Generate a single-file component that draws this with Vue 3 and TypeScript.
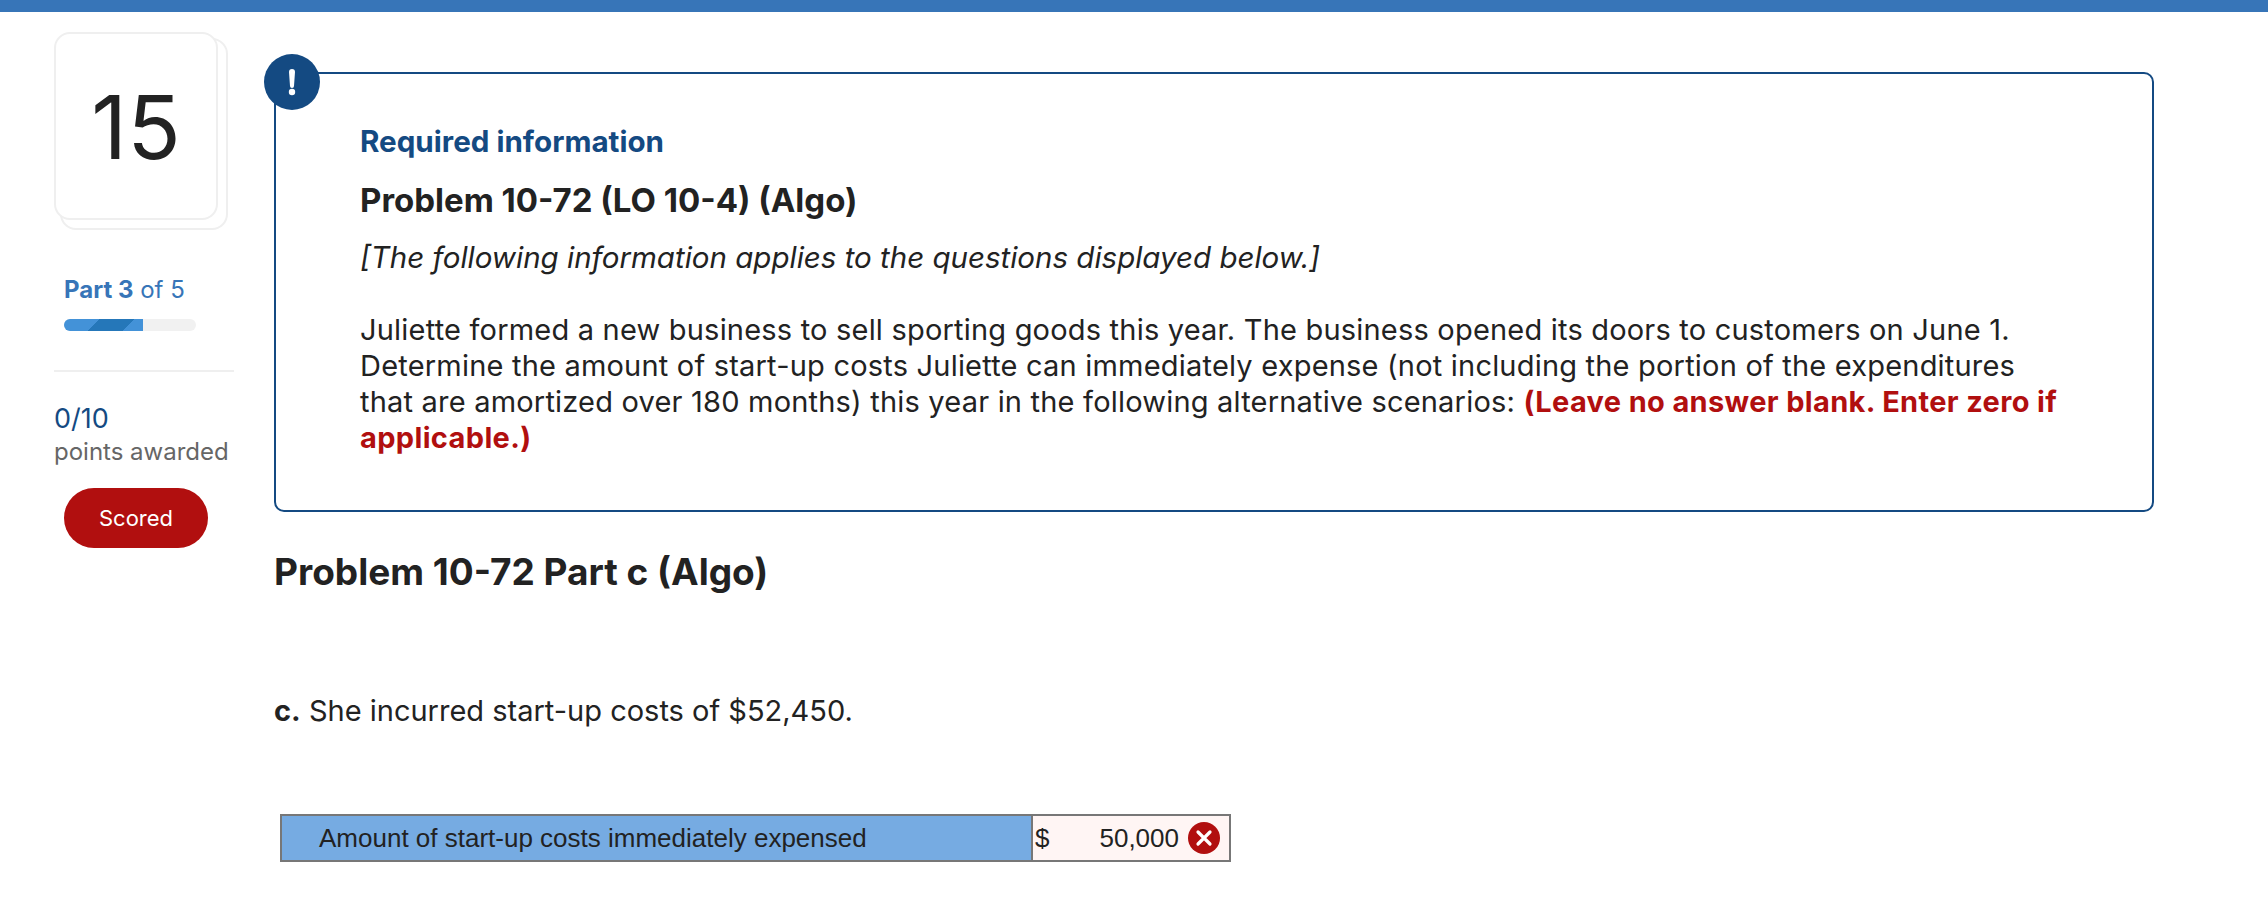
<template>
  <div class="page">
    <div class="top-bar"></div>
    <div class="layout">
      <aside class="sidebar">
        <div class="number-card">
          <div class="number-back"></div>
          <div class="number-face">{{ questionNumber }}</div>
        </div>
        <div class="part-label"><strong>Part {{ part }}</strong> of {{ totalParts }}</div>
        <div class="progress">
          <div class="progress-fill" :style="{ width: progressWidth }"></div>
        </div>
        <hr class="divider" />
        <div class="score">0/10</div>
        <div class="score-label">points awarded</div>
        <div class="scored-pill">Scored</div>
      </aside>

      <main class="content">
        <section class="info-box">
          <span class="info-badge">
            <svg width="14" height="28" viewBox="0 0 14 28" aria-hidden="true">
              <path d="M4 4a3 3 0 0 1 6 0L9 18a2 2 0 0 1-4 0Z" fill="#fff" />
              <circle cx="7" cy="24" r="3.2" fill="#fff" />
            </svg>
          </span>
          <div class="required">Required information</div>
          <div class="problem-title">Problem 10-72 (LO 10-4) (Algo)</div>
          <p class="note">[The following information applies to the questions displayed below.]</p>
          <p class="body-text">
            Juliette formed a new business to sell sporting goods this year. The business opened its doors to customers on June 1.<br />
            Determine the amount of start-up costs Juliette can immediately expense (not including the portion of the expenditures<br />
            that are amortized over 180 months) this year in the following alternative scenarios:
            <strong class="warning">(Leave no answer blank. Enter zero if<br />applicable.)</strong>
          </p>
        </section>

        <h2 class="part-title">Problem 10-72 Part c (Algo)</h2>
        <p class="question"><strong>c.</strong> She incurred start-up costs of $52,450.</p>

        <table class="answer-table">
          <tbody>
            <tr>
              <td class="label-cell">Amount of start-up costs immediately expensed</td>
              <td class="value-cell">
                <div class="value-row">
                  <span>$</span>
                  <span class="value">50,000</span>
                  <svg class="wrong" width="32" height="32" viewBox="0 0 32 32" aria-hidden="true">
                    <circle cx="16" cy="16" r="16" fill="#b10f0f" />
                    <path d="M10 10l12 12M22 10L10 22" stroke="#fff" stroke-width="3.2" stroke-linecap="round" />
                  </svg>
                </div>
              </td>
            </tr>
          </tbody>
        </table>
      </main>
    </div>
  </div>
</template>

<script setup lang="ts">
import { computed } from 'vue';

const questionNumber = 15;
const part = 3;
const totalParts = 5;

const progressWidth = computed(() => `${(part / totalParts) * 100}%`);
</script>

<style>
html,
body {
  margin: 0;
  background: #fff;
}
</style>

<style scoped>
.page {
  width: 2268px;
  height: 920px;
  overflow: hidden;
  font-family: Inter, Lato, sans-serif;
  color: #222;
}

.top-bar {
  height: 12px;
  background: #3775b8;
}

.layout {
  display: flex;
  padding: 20px 114px 0 54px;
}

.sidebar {
  width: 180px;
  flex-shrink: 0;
  margin-right: 40px;
}

.number-card {
  position: relative;
  width: 174px;
  height: 198px;
  margin-bottom: 45px;
}

.number-back {
  position: absolute;
  left: 6px;
  top: 6px;
  right: 0;
  bottom: 0;
  box-sizing: border-box;
  border: 2px solid #efefef;
  border-radius: 16px;
}

.number-face {
  position: relative;
  width: 164px;
  height: 188px;
  box-sizing: border-box;
  padding-top: 2px;
  border: 2px solid #efefef;
  border-radius: 16px;
  background: #fff;
  display: flex;
  align-items: center;
  justify-content: center;
  font-size: 88px;
  color: #222;
}

.part-label {
  margin-left: 10px;
  font-size: 24px;
  line-height: 30px;
  color: #3775b8;
}

.progress {
  width: 132px;
  height: 12px;
  margin: 14px 0 39px 10px;
  border-radius: 6px;
  background: #f1f1f1;
  overflow: hidden;
}

.progress-fill {
  height: 100%;
  background: linear-gradient(135deg, #4392d8 0 39%, #2577b9 39% 77%, #4392d8 77%);
}

.divider {
  height: 2px;
  margin: 0 0 31px;
  border: 0;
  background: #efefef;
}

.score {
  font-size: 27px;
  line-height: 32px;
  color: #144a82;
}

.score-label {
  font-size: 24px;
  line-height: 34px;
  color: #666;
}

.scored-pill {
  width: 144px;
  height: 60px;
  margin: 19px 0 0 10px;
  border-radius: 30px;
  background: #b10f0f;
  color: #fff;
  font-size: 22px;
  display: flex;
  align-items: center;
  justify-content: center;
}

.content {
  flex: 1;
  min-width: 0;
  padding-top: 40px;
}

.info-box {
  position: relative;
  height: 440px;
  box-sizing: border-box;
  padding: 47px 40px 0 84px;
  border: 2px solid #144a82;
  border-radius: 10px;
}

.info-badge {
  position: absolute;
  left: -12px;
  top: -20px;
  width: 56px;
  height: 56px;
  border-radius: 50%;
  background: #144a82;
  display: flex;
  align-items: center;
  justify-content: center;
}

.required {
  font-size: 29.6px;
  line-height: 40px;
  font-weight: 700;
  color: #144a82;
}

.problem-title {
  margin-top: 18px;
  font-size: 33px;
  line-height: 42px;
  font-weight: 700;
}

.note {
  margin: 16px 0 0;
  font-size: 29.5px;
  line-height: 40px;
  font-style: italic;
}

.body-text {
  margin: 35px 0 0;
  font-size: 29px;
  line-height: 36px;
  letter-spacing: 0.2px;
}

.warning {
  color: #b10f0f;
  letter-spacing: 0.35px;
}

.part-title {
  margin: 37px 0 0;
  font-size: 37px;
  line-height: 46px;
  font-weight: 700;
}

.question {
  margin: 94px 0 0;
  font-size: 29px;
  line-height: 44px;
}

.answer-table {
  width: 951px;
  height: 48px;
  margin: 81px 0 0 6px;
  border-collapse: collapse;
  table-layout: fixed;
  font-family: "Liberation Sans", Arial, sans-serif;
  font-size: 26px;
}

.answer-table td {
  border: 2px solid #777;
  padding: 0;
}

.label-cell {
  width: 712px;
  padding-left: 37px !important;
  background: #76abe2;
  color: #222;
}

.value-cell {
  background: #fff5f4;
}

.value-row {
  display: flex;
  align-items: center;
  padding: 0 9px 0 2px;
}

.value {
  margin-left: auto;
  margin-right: 9px;
}
</style>
